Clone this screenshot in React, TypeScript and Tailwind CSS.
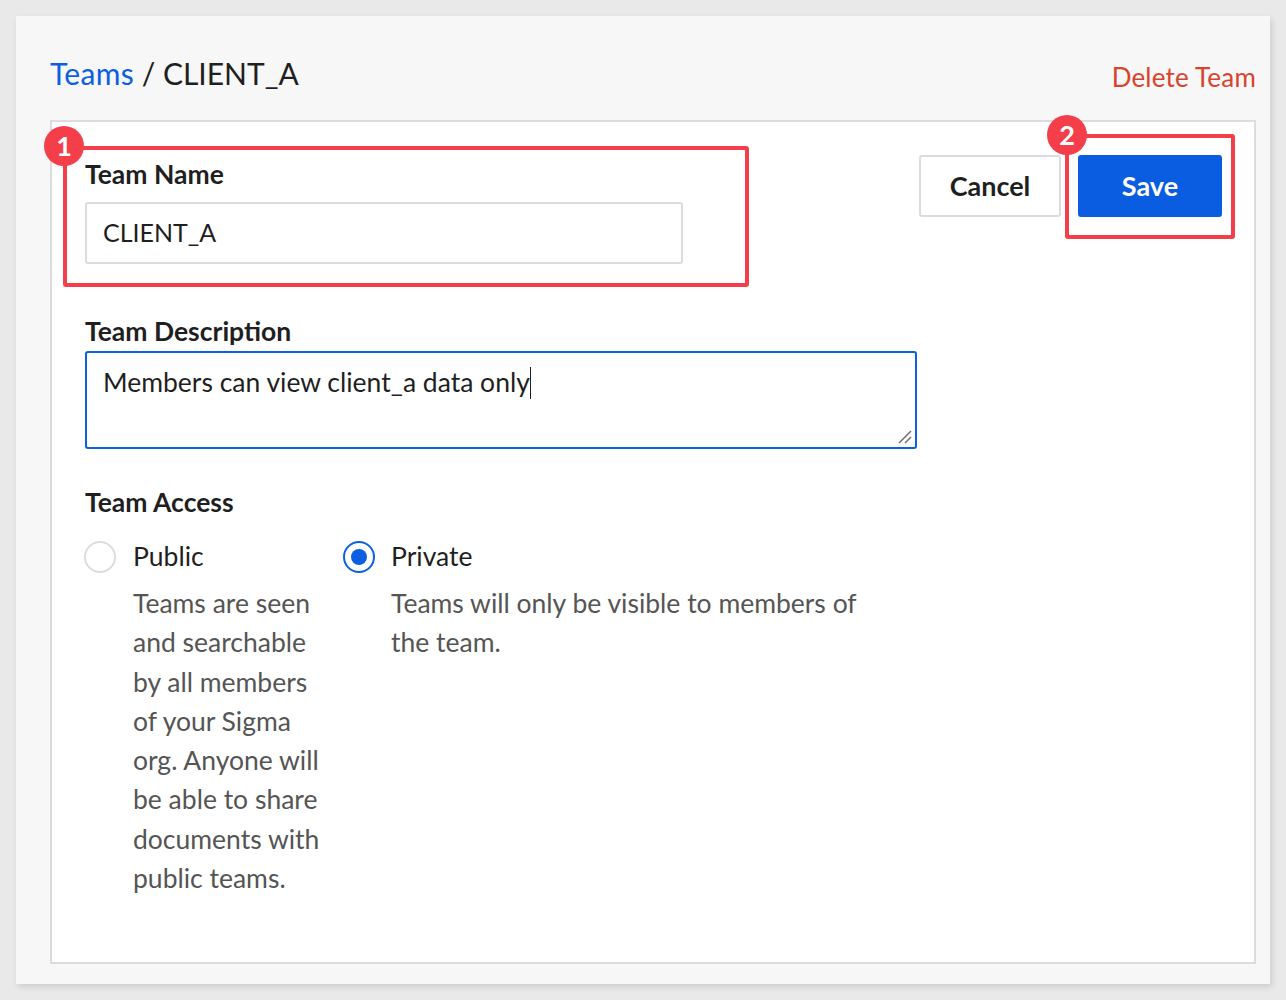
import React from "react";

export default function App() {
  const font = { fontFamily: '"Source Sans Pro", Lato, "Noto Sans", sans-serif' };
  return (
    <div className="min-h-screen w-full bg-[#e9e9e9] p-[16px]" style={font}>
      <div className="w-[1254px] h-[968px] bg-[#f7f7f7] shadow-[2px_3px_6px_rgba(0,0,0,0.12)] flex flex-col pl-[34px] pr-[14px] pb-[20px]">
        <div className="h-[104px] flex items-start justify-between">
          <div className="mt-[39px] text-[30px] leading-[36px] text-[#1f1f1f]">
            <span className="text-[#0b5fe0] tracking-[0.3px]">Teams</span> / CLIENT_A
          </div>
          <div className="mt-[45px] text-[26px] leading-[32px] text-[#d9432c] tracking-[0.2px]">Delete Team</div>
        </div>
        <div className="relative flex-1 bg-white border-2 border-[#dcdcdc] pl-[33px] pt-[33px]">
          <div className="flex items-start">
            <div className="w-[834px] flex flex-col">
              <div className="mt-[4px] text-[26.5px] leading-[30px] font-bold text-[#1f1f1f]">Team Name</div>
              <div className="mt-[13px] w-[598px] h-[62px] border-2 border-[#dcdcdc] rounded-[3px] flex items-center pl-[16px] text-[25px] text-[#1f1f1f]">
                CLIENT_A
              </div>
              <div className="mt-[52px] text-[26.5px] leading-[30px] font-bold text-[#1f1f1f]">Team Description</div>
              <div className="relative mt-[5px] w-[832px] h-[98px] border-2 border-[#0b5fe0] rounded-[3px] pl-[16px] pt-[14px] text-[26.5px] leading-[30px] text-[#1f1f1f]">
                <span>Members can view client_a data only</span>
                <span className="inline-block align-middle w-[1.5px] h-[32px] bg-[#1f1f1f] -mt-[4px]"></span>
                <svg className="absolute right-[2px] bottom-[2px]" width="16" height="16" viewBox="0 0 16 16">
                  <line x1="2" y1="14" x2="14" y2="2" stroke="#6b6b6b" strokeWidth="1.5" />
                  <line x1="8" y1="14" x2="14" y2="8" stroke="#6b6b6b" strokeWidth="1.5" />
                </svg>
              </div>
              <div className="mt-[38px] text-[26.5px] leading-[30px] font-bold text-[#1f1f1f]">Team Access</div>
              <div className="mt-[20px] flex">
                <div className="w-[258px] flex flex-col">
                  <div className="flex items-center h-[39px]">
                    <div className="w-[32px] h-[32px] rounded-full border-2 border-[#dcdcdc] bg-white -ml-[1px]"></div>
                    <span className="ml-[17px] text-[26.5px] text-[#1f1f1f]">Public</span>
                  </div>
                  <div className="ml-[48px] mt-[8px] w-[204px] text-[26.5px] leading-[39.3px] text-[#555555]">
                    Teams are seen and searchable by all members of your Sigma org. Anyone will be able to share documents with public teams.
                  </div>
                </div>
                <div className="flex flex-col">
                  <div className="flex items-center h-[39px]">
                    <div className="w-[32px] h-[32px] rounded-full border-2 border-[#0b5fe0] bg-white flex items-center justify-center">
                      <div className="w-[16px] h-[16px] rounded-full bg-[#0b5fe0]"></div>
                    </div>
                    <span className="ml-[16px] text-[26.5px] text-[#1f1f1f]">Private</span>
                  </div>
                  <div className="ml-[48px] mt-[8px] w-[490px] text-[26.5px] leading-[39.3px] text-[#555555]">
                    Teams will only be visible to members of the team.
                  </div>
                </div>
              </div>
            </div>
            <div className="flex gap-[17px]">
              <button className="w-[142px] h-[62px] bg-white border-2 border-[#dcdcdc] rounded-[3px] text-[27px] font-bold text-[#1f1f1f]">
                Cancel
              </button>
              <button className="w-[144px] h-[62px] bg-[#0a5ce1] rounded-[3px] text-[27px] font-bold text-white">
                Save
              </button>
            </div>
          </div>

          <div className="absolute left-[11px] top-[24px] w-[686px] h-[141px] border-[4px] border-[#f43f4b] rounded-[3px] pointer-events-none"></div>
          <div className="absolute left-[-8px] top-[4px] w-[40px] h-[40px] rounded-full bg-[#f43f4b] flex items-center justify-center text-white text-[27px] font-bold">
            1
          </div>
          <div className="absolute left-[1013px] top-[12px] w-[170px] h-[105px] border-[4px] border-[#f43f4b] rounded-[3px] pointer-events-none"></div>
          <div className="absolute left-[995px] top-[-7px] w-[40px] h-[40px] rounded-full bg-[#f43f4b] flex items-center justify-center text-white text-[27px] font-bold">
            2
          </div>
        </div>
      </div>
    </div>
  );
}
